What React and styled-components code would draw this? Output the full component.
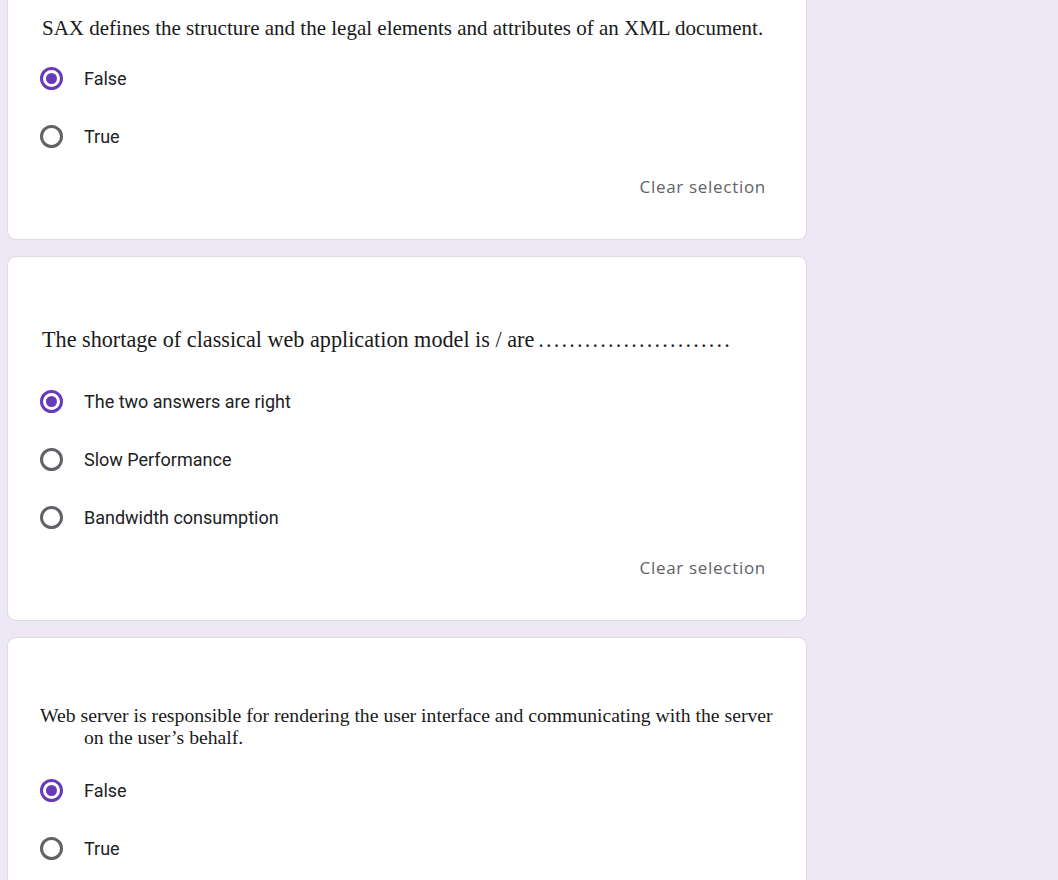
import React from "react";
import styled, { createGlobalStyle, css } from "styled-components";

/**
 * Page wide reset
 */
const GlobalStyle = createGlobalStyle`
	html, body {
		margin: 0;
		padding: 0;
		background: #ede7f6;
	}
	body {
		font-family: Roboto, "Noto Sans", Arial, sans-serif;
	}
`;

/**
 * The column of question cards
 */
const Page = styled.div`
	width: 800px;
	padding: 0 0 0 7px;
	display: flex;
	flex-direction: column;
	gap: 16px;
	height: 880px;
	overflow: hidden;
`;

/**
 * One question card
 */
const Card = styled.section`
	background: #fff;
	border: 1px solid #dadce0;
	border-radius: 9px;
	padding: ${props => props.top}px 40px ${props => props.bottom || 42}px 32px;
	flex-shrink: 0;

	${props => props.clipped && css`
		border-top: none;
		border-radius: 0 0 9px 9px;
	`}
`;

/**
 * The question text, which in the form is a scanned picture of serif type
 */
const Question = styled.div`
	font-family: "Liberation Serif", "Times New Roman", serif;
	font-size: ${props => props.size || 21}px;
	line-height: ${props => props.lh || 24}px;
	color: #1a1a1a;
	padding-left: ${props => props.indent ?? 2}px;
	margin-bottom: ${props => props.gap}px;
	white-space: pre;
`;

const Indent = styled.span`
	display: block;
	padding-left: 44px;
`;

const Dots = styled.span`
	letter-spacing: 2.2px;
	margin-left: 4px;
`;

/**
 * The list of answers
 */
const Options = styled.div`
	display: flex;
	flex-direction: column;
	gap: 34px;
`;

const Option = styled.label`
	display: flex;
	align-items: center;
	height: 24px;
	gap: 21px;
	font-size: 18px;
	color: #202124;
	cursor: pointer;
`;

/**
 * The radio circle
 */
const Radio = styled.span`
	box-sizing: border-box;
	width: 23px;
	height: 23px;
	border-radius: 50%;
	border: 3px solid #5f6368;
	display: flex;
	align-items: center;
	justify-content: center;
	flex-shrink: 0;

	${props => props.checked && css`
		border-color: #673ab7;
		&::after {
			content: "";
			width: 11px;
			height: 11px;
			border-radius: 50%;
			background: #673ab7;
		}
	`}
`;

/**
 * The clear selection link
 */
const ClearRow = styled.div`
	display: flex;
	justify-content: flex-end;
	margin-top: 26px;
	height: 24px;
	align-items: center;
`;

const ClearButton = styled.span`
	font-family: "Open Sans", Roboto, sans-serif;
	font-size: 17px;
	font-weight: 500;
	color: #5f6368;
	letter-spacing: 0.7px;
`;

const questions = [
	{
		top: 16,
		bottom: 41,
		clipped: true,
		gap: 26,
		text: "SAX defines the structure and the legal elements and attributes of an XML document.",
		options: ["False", "True"],
		checked: 0,
		clear: true,
	},
	{
		top: 71,
		bottom: 41,
		gap: 37,
		size: 22.2,
		text: "The shortage of classical web application model is / are",
		dots: 25,
		options: ["The two answers are right", "Slow Performance", "Bandwidth consumption"],
		checked: 0,
		clear: true,
	},
	{
		top: 66,
		gap: 30,
		size: 19.7,
		lh: 22,
		indent: 0,
		text: "Web server is responsible for rendering the user interface and communicating with the server",
		second: "on the user\u2019s behalf.",
		options: ["False", "True"],
		checked: 0,
	},
];

const QuestionCard = ({ q }) => (
	<Card top={q.top} bottom={q.bottom} clipped={q.clipped}>
		<Question gap={q.gap} size={q.size} lh={q.lh} indent={q.indent}>
			{q.text}
			{q.dots && <Dots>{".".repeat(q.dots)}</Dots>}
			{q.second && <Indent>{q.second}</Indent>}
		</Question>
		<Options>
			{q.options.map((label, i) => (
				<Option key={label}>
					<Radio checked={i === q.checked} />
					{label}
				</Option>
			))}
		</Options>
		{q.clear && (
			<ClearRow>
				<ClearButton>Clear selection</ClearButton>
			</ClearRow>
		)}
	</Card>
);

export default function App() {
	return (
		<>
			<GlobalStyle />
			<Page>
				{questions.map((q, i) => (
					<QuestionCard key={i} q={q} />
				))}
			</Page>
		</>
	);
}
